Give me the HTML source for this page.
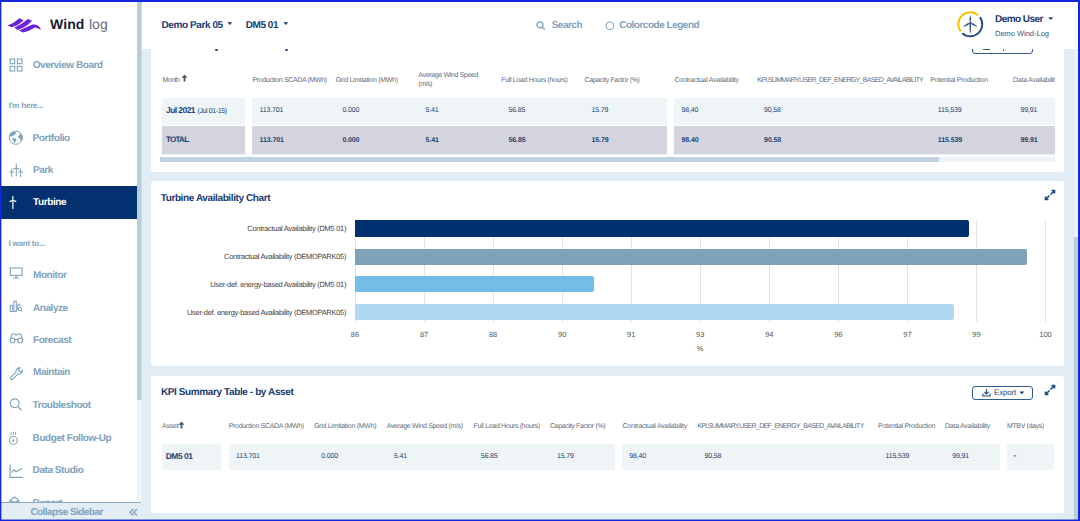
<!DOCTYPE html><html><head><meta charset="utf-8"><style>
html,body{margin:0;padding:0}
body{width:1080px;height:521px;overflow:hidden;position:relative;background:#fff;font-family:"Liberation Sans",sans-serif;text-rendering:geometricPrecision}
.t{position:absolute;white-space:nowrap;line-height:1}
.b{position:absolute}
</style></head><body>
<div class="b" style="left:141px;top:49px;width:933px;height:472px;background:#e1ecf5;"></div>
<div class="b" style="left:1074px;top:49px;width:4px;height:472px;background:#eef3f7;"></div>
<div class="b" style="left:1074px;top:237px;width:4px;height:284px;background:#bccfdc;"></div>
<div class="b" style="left:151px;top:20px;width:913px;height:152px;background:#fff;border-radius:3px"></div>
<div class="b" style="left:151px;top:181px;width:913px;height:185px;background:#fff;border-radius:3px"></div>
<div class="b" style="left:151px;top:375.8px;width:913px;height:137.2px;background:#fff;border-radius:3px"></div>
<div class="t" style="left:162.50px;top:77px;font-size:7px;font-weight:normal;color:#5f6b78;letter-spacing:-0.49px;">Month</div>
<svg class="b" style="left:181.3px;top:73.8px;" width="7" height="8" viewBox="0 0 7 8"><path d="M3.5 0.5 L6.5 3.8 L4.4 3.8 L4.4 7.5 L2.6 7.5 L2.6 3.8 L0.5 3.8 Z" fill="#4a5a6a"/></svg>
<div class="t" style="left:252.50px;top:77px;font-size:7px;font-weight:normal;color:#5f6b78;letter-spacing:-0.359px;">Production SCADA (MWh)</div>
<div class="t" style="left:335.70px;top:77px;font-size:7px;font-weight:normal;color:#5f6b78;letter-spacing:-0.285px;">Grid Limitation (MWh)</div>
<div class="t" style="left:501.20px;top:77px;font-size:7px;font-weight:normal;color:#5f6b78;letter-spacing:-0.314px;">Full Load Hours (hours)</div>
<div class="t" style="left:584.50px;top:77px;font-size:7px;font-weight:normal;color:#5f6b78;letter-spacing:-0.361px;">Capacity Factor (%)</div>
<div class="t" style="left:674.50px;top:77px;font-size:7px;font-weight:normal;color:#5f6b78;letter-spacing:-0.255px;">Contractual Availability</div>
<div class="t" style="left:757.30px;top:77px;font-size:7px;font-weight:normal;color:#5f6b78;letter-spacing:-0.683px;">KPI.SUMMARY.USER_DEF_ENERGY_BASED_AVAILABILITY</div>
<div class="t" style="left:930.20px;top:77px;font-size:7px;font-weight:normal;color:#5f6b78;letter-spacing:-0.253px;">Potential Production</div>
<div class="t" style="left:418.30px;top:72px;font-size:7px;font-weight:normal;color:#5f6b78;letter-spacing:-0.35px;">Average Wind Speed</div>
<div class="t" style="left:418.30px;top:81px;font-size:7px;font-weight:normal;color:#5f6b78;letter-spacing:-0.5px;">(m/s)</div>
<div class="b" style="left:1013px;top:70px;width:42px;height:16px;overflow:hidden">
<div class="t" style="left:0.00px;top:7px;font-size:7px;font-weight:normal;color:#5f6b78;letter-spacing:-0.25px;">Data Availability</div>
</div>
<div class="b" style="left:162px;top:98px;width:83px;height:25.5px;background:#eff4f7;box-shadow:0 1px 1px rgba(0,0,0,0.05)"></div>
<div class="b" style="left:251.8px;top:98px;width:415px;height:25.5px;background:#eff4f7;box-shadow:0 1px 1px rgba(0,0,0,0.05)"></div>
<div class="b" style="left:674px;top:98px;width:381px;height:25.5px;background:#eff4f7;box-shadow:0 1px 1px rgba(0,0,0,0.05)"></div>
<div class="b" style="left:162px;top:125.6px;width:83px;height:28.4px;background:#d4d4df;box-shadow:0 1px 1px rgba(0,0,0,0.05)"></div>
<div class="b" style="left:251.8px;top:125.6px;width:415px;height:28.4px;background:#d4d4df;box-shadow:0 1px 1px rgba(0,0,0,0.05)"></div>
<div class="b" style="left:674px;top:125.6px;width:381px;height:28.4px;background:#d4d4df;box-shadow:0 1px 1px rgba(0,0,0,0.05)"></div>
<div class="t" style="left:166.00px;top:106px;font-size:8.5px;font-weight:bold;color:#213f70;letter-spacing:-0.57px;">Jul 2021</div>
<div class="t" style="left:197.50px;top:108px;font-size:7px;font-weight:normal;color:#213f70;letter-spacing:-0.38px;">(Jul 01-15)</div>
<div class="t" style="left:166.00px;top:136px;font-size:8px;font-weight:bold;color:#213f70;letter-spacing:-0.72px;">TOTAL</div>
<div class="t" style="left:259.60px;top:107px;font-size:7px;font-weight:normal;color:#213f70;letter-spacing:-0.15px;">113.701</div>
<div class="t" style="left:259.60px;top:137px;font-size:7px;font-weight:bold;color:#213f70;letter-spacing:-0.1px;">113.701</div>
<div class="t" style="left:342.40px;top:107px;font-size:7px;font-weight:normal;color:#213f70;letter-spacing:-0.15px;">0.000</div>
<div class="t" style="left:342.40px;top:137px;font-size:7px;font-weight:bold;color:#213f70;letter-spacing:-0.1px;">0.000</div>
<div class="t" style="left:425.50px;top:107px;font-size:7px;font-weight:normal;color:#213f70;letter-spacing:-0.15px;">5.41</div>
<div class="t" style="left:425.50px;top:137px;font-size:7px;font-weight:bold;color:#213f70;letter-spacing:-0.1px;">5.41</div>
<div class="t" style="left:508.50px;top:107px;font-size:7px;font-weight:normal;color:#213f70;letter-spacing:-0.15px;">56.85</div>
<div class="t" style="left:508.50px;top:137px;font-size:7px;font-weight:bold;color:#213f70;letter-spacing:-0.1px;">56.85</div>
<div class="t" style="left:591.50px;top:107px;font-size:7px;font-weight:normal;color:#213f70;letter-spacing:-0.15px;">15.79</div>
<div class="t" style="left:591.50px;top:137px;font-size:7px;font-weight:bold;color:#213f70;letter-spacing:-0.1px;">15.79</div>
<div class="t" style="left:681.50px;top:107px;font-size:7px;font-weight:normal;color:#213f70;letter-spacing:-0.15px;">98,40</div>
<div class="t" style="left:681.50px;top:137px;font-size:7px;font-weight:bold;color:#213f70;letter-spacing:-0.1px;">98.40</div>
<div class="t" style="left:764.10px;top:107px;font-size:7px;font-weight:normal;color:#213f70;letter-spacing:-0.15px;">90,58</div>
<div class="t" style="left:764.10px;top:137px;font-size:7px;font-weight:bold;color:#213f70;letter-spacing:-0.1px;">90.58</div>
<div class="t" style="left:937.80px;top:107px;font-size:7px;font-weight:normal;color:#213f70;letter-spacing:-0.15px;">115,539</div>
<div class="t" style="left:937.80px;top:137px;font-size:7px;font-weight:bold;color:#213f70;letter-spacing:-0.1px;">115.539</div>
<div class="t" style="left:1020.50px;top:107px;font-size:7px;font-weight:normal;color:#213f70;letter-spacing:-0.15px;">99,91</div>
<div class="t" style="left:1020.50px;top:137px;font-size:7px;font-weight:bold;color:#213f70;letter-spacing:-0.1px;">99.91</div>
<div class="b" style="left:160px;top:157.2px;width:895px;height:5px;background:#eef3f6;"></div>
<div class="b" style="left:160px;top:157.2px;width:778.6px;height:5px;background:#bfd2de;"></div>
<div class="b" style="left:972.2px;top:31px;width:61.3px;height:23.1px;background:transparent;border:1px solid #2f5a94;border-radius:3px;box-sizing:border-box"></div>
<div class="t" style="left:160.70px;top:194px;font-size:10px;font-weight:bold;color:#193a70;letter-spacing:-0.39px;">Turbine Availability Chart</div>
<div class="b" style="left:354.5px;top:219.7px;width:1px;height:102px;background:#e3e3e3;"></div>
<div class="b" style="left:423.55px;top:219.7px;width:1px;height:102px;background:#e3e3e3;"></div>
<div class="b" style="left:492.6px;top:219.7px;width:1px;height:102px;background:#e3e3e3;"></div>
<div class="b" style="left:561.65px;top:219.7px;width:1px;height:102px;background:#e3e3e3;"></div>
<div class="b" style="left:630.7px;top:219.7px;width:1px;height:102px;background:#e3e3e3;"></div>
<div class="b" style="left:699.75px;top:219.7px;width:1px;height:102px;background:#e3e3e3;"></div>
<div class="b" style="left:768.8px;top:219.7px;width:1px;height:102px;background:#e3e3e3;"></div>
<div class="b" style="left:837.85px;top:219.7px;width:1px;height:102px;background:#e3e3e3;"></div>
<div class="b" style="left:906.9px;top:219.7px;width:1px;height:102px;background:#e3e3e3;"></div>
<div class="b" style="left:975.95px;top:219.7px;width:1px;height:102px;background:#e3e3e3;"></div>
<div class="b" style="left:1045.0px;top:219.7px;width:1px;height:102px;background:#e3e3e3;"></div>
<div class="b" style="left:355px;top:220.3px;width:614.3px;height:16.5px;background:#00306e;border-radius:0 2px 2px 0"></div>
<div class="b" style="left:355px;top:248.7px;width:671.9px;height:16px;background:#7fa3b9;border-radius:0 2px 2px 0"></div>
<div class="b" style="left:355px;top:276.4px;width:238.9px;height:15.8px;background:#74bde6;border-radius:0 2px 2px 0"></div>
<div class="b" style="left:355px;top:304.2px;width:598.8px;height:16px;background:#b0d8f0;border-radius:0 2px 2px 0"></div>
<div class="t" style="right:733.90px;top:225px;font-size:7.5px;font-weight:normal;color:#444;letter-spacing:-0.3px;text-align:right;">Contractual Availability (DM5 01)</div>
<div class="t" style="right:733.90px;top:253px;font-size:7.5px;font-weight:normal;color:#444;letter-spacing:-0.3px;text-align:right;">Contractual Availability (DEMOPARK05)</div>
<div class="t" style="right:733.90px;top:281px;font-size:7.5px;font-weight:normal;color:#444;letter-spacing:-0.3px;text-align:right;">User-def. energy-based Availability (DM5 01)</div>
<div class="t" style="right:733.90px;top:309px;font-size:7.5px;font-weight:normal;color:#444;letter-spacing:-0.3px;text-align:right;">User-def. energy-based Availability (DEMOPARK05)</div>
<div class="t" style="left:255.00px;width:200px;text-align:center;top:331px;font-size:7.5px;font-weight:normal;color:#555;letter-spacing:0px;">86</div>
<div class="t" style="left:324.05px;width:200px;text-align:center;top:331px;font-size:7.5px;font-weight:normal;color:#555;letter-spacing:0px;">87</div>
<div class="t" style="left:393.10px;width:200px;text-align:center;top:331px;font-size:7.5px;font-weight:normal;color:#555;letter-spacing:0px;">88</div>
<div class="t" style="left:462.15px;width:200px;text-align:center;top:331px;font-size:7.5px;font-weight:normal;color:#555;letter-spacing:0px;">90</div>
<div class="t" style="left:531.20px;width:200px;text-align:center;top:331px;font-size:7.5px;font-weight:normal;color:#555;letter-spacing:0px;">91</div>
<div class="t" style="left:600.25px;width:200px;text-align:center;top:331px;font-size:7.5px;font-weight:normal;color:#555;letter-spacing:0px;">93</div>
<div class="t" style="left:669.30px;width:200px;text-align:center;top:331px;font-size:7.5px;font-weight:normal;color:#555;letter-spacing:0px;">94</div>
<div class="t" style="left:738.35px;width:200px;text-align:center;top:331px;font-size:7.5px;font-weight:normal;color:#555;letter-spacing:0px;">96</div>
<div class="t" style="left:807.40px;width:200px;text-align:center;top:331px;font-size:7.5px;font-weight:normal;color:#555;letter-spacing:0px;">97</div>
<div class="t" style="left:876.45px;width:200px;text-align:center;top:331px;font-size:7.5px;font-weight:normal;color:#555;letter-spacing:0px;">99</div>
<div class="t" style="left:945.50px;width:200px;text-align:center;top:331px;font-size:7.5px;font-weight:normal;color:#555;letter-spacing:0px;">100</div>
<div class="t" style="left:600.20px;width:200px;text-align:center;top:345px;font-size:7.5px;font-weight:normal;color:#555;letter-spacing:0px;">%</div>
<svg class="b" style="left:1044px;top:189px;" width="12" height="12" viewBox="0 0 12 12"><path d="M6.5 5.5 L10.5 1.5 M7.5 1.5 H10.5 V4.5 M5.5 6.5 L1.5 10.5 M1.5 7.5 V10.5 H4.5" stroke="#1f4a8a" stroke-width="1.6" fill="none"/></svg>
<div class="t" style="left:160.90px;top:388px;font-size:10px;font-weight:bold;color:#193a70;letter-spacing:-0.39px;">KPI Summary Table - by Asset</div>
<div class="b" style="left:972.2px;top:386px;width:61.3px;height:13.8px;background:#fff;border:1px solid #2f5a94;border-radius:3px;box-sizing:border-box"></div>
<svg class="b" style="left:981.5px;top:388px;" width="9" height="9" viewBox="0 0 9 9"><path d="M4.5 0.8 V5.8 M2.3 3.8 L4.5 6 L6.7 3.8 M0.8 5.5 V8 H8.2 V5.5" stroke="#2a4a7a" stroke-width="1.1" fill="none"/></svg>
<div class="t" style="left:994.10px;top:389px;font-size:8px;font-weight:normal;color:#2a4570;letter-spacing:-0.2px;">Export</div>
<svg class="b" style="left:1018.5px;top:390.5px;" width="6" height="4" viewBox="0 0 6 4"><path d="M0.3 0.5 H5.3 L2.8 3.3 Z" fill="#1d3c6b"/></svg>
<svg class="b" style="left:1044.3px;top:384.4px;" width="12" height="12" viewBox="0 0 12 12"><path d="M6.5 5.5 L10.5 1.5 M7.5 1.5 H10.5 V4.5 M5.5 6.5 L1.5 10.5 M1.5 7.5 V10.5 H4.5" stroke="#1f4a8a" stroke-width="1.6" fill="none"/></svg>
<div class="t" style="left:162.00px;top:423px;font-size:7px;font-weight:normal;color:#5f6b78;letter-spacing:-0.2px;">Asset</div>
<svg class="b" style="left:177.5px;top:420.5px;" width="7" height="8" viewBox="0 0 7 8"><path d="M3.5 0.5 L6.5 3.8 L4.4 3.8 L4.4 7.5 L2.6 7.5 L2.6 3.8 L0.5 3.8 Z" fill="#4a5a6a"/></svg>
<div class="t" style="left:228.70px;top:423px;font-size:7px;font-weight:normal;color:#5f6b78;letter-spacing:-0.313px;">Production SCADA (MWh)</div>
<div class="t" style="left:313.90px;top:423px;font-size:7px;font-weight:normal;color:#5f6b78;letter-spacing:-0.266px;">Grid Limitation (MWh)</div>
<div class="t" style="left:386.70px;top:423px;font-size:7px;font-weight:normal;color:#5f6b78;letter-spacing:-0.33px;">Average Wind Speed (m/s)</div>
<div class="t" style="left:473.50px;top:423px;font-size:7px;font-weight:normal;color:#5f6b78;letter-spacing:-0.314px;">Full Load Hours (hours)</div>
<div class="t" style="left:549.90px;top:423px;font-size:7px;font-weight:normal;color:#5f6b78;letter-spacing:-0.34px;">Capacity Factor (%)</div>
<div class="t" style="left:622.50px;top:423px;font-size:7px;font-weight:normal;color:#5f6b78;letter-spacing:-0.238px;">Contractual Availability</div>
<div class="t" style="left:697.20px;top:423px;font-size:7px;font-weight:normal;color:#5f6b78;letter-spacing:-0.665px;">KPI.SUMMARY.USER_DEF_ENERGY_BASED_AVAILABILITY</div>
<div class="t" style="left:878.00px;top:423px;font-size:7px;font-weight:normal;color:#5f6b78;letter-spacing:-0.273px;">Potential Production</div>
<div class="t" style="left:945.00px;top:423px;font-size:7px;font-weight:normal;color:#5f6b78;letter-spacing:-0.253px;">Data Availability</div>
<div class="t" style="left:1007.00px;top:423px;font-size:7px;font-weight:normal;color:#5f6b78;letter-spacing:-0.377px;">MTBV (days)</div>
<div class="b" style="left:161.6px;top:443.8px;width:59.7px;height:25.2px;background:#eff4f7;box-shadow:0 1px 1px rgba(0,0,0,0.06);border-radius:2px"></div>
<div class="b" style="left:228.7px;top:443.8px;width:386.3px;height:25.2px;background:#eff4f7;box-shadow:0 1px 1px rgba(0,0,0,0.06);border-radius:2px"></div>
<div class="b" style="left:622.2px;top:443.8px;width:377.7px;height:25.2px;background:#eff4f7;box-shadow:0 1px 1px rgba(0,0,0,0.06);border-radius:2px"></div>
<div class="b" style="left:1006.5px;top:443.8px;width:47.3px;height:25.2px;background:#eff4f7;box-shadow:0 1px 1px rgba(0,0,0,0.06);border-radius:2px"></div>
<div class="t" style="left:165.70px;top:452px;font-size:8.5px;font-weight:bold;color:#213f70;letter-spacing:-0.51px;">DM5 01</div>
<div class="t" style="left:236.10px;top:453px;font-size:7px;font-weight:normal;color:#213f70;letter-spacing:-0.15px;">113.701</div>
<div class="t" style="left:321.30px;top:453px;font-size:7px;font-weight:normal;color:#213f70;letter-spacing:-0.15px;">0.000</div>
<div class="t" style="left:394.00px;top:453px;font-size:7px;font-weight:normal;color:#213f70;letter-spacing:-0.15px;">5.41</div>
<div class="t" style="left:480.70px;top:453px;font-size:7px;font-weight:normal;color:#213f70;letter-spacing:-0.15px;">56.85</div>
<div class="t" style="left:557.10px;top:453px;font-size:7px;font-weight:normal;color:#213f70;letter-spacing:-0.15px;">15.79</div>
<div class="t" style="left:629.30px;top:453px;font-size:7px;font-weight:normal;color:#213f70;letter-spacing:-0.15px;">98,40</div>
<div class="t" style="left:704.50px;top:453px;font-size:7px;font-weight:normal;color:#213f70;letter-spacing:-0.15px;">90,58</div>
<div class="t" style="left:885.50px;top:453px;font-size:7px;font-weight:normal;color:#213f70;letter-spacing:-0.15px;">115,539</div>
<div class="t" style="left:952.20px;top:453px;font-size:7px;font-weight:normal;color:#213f70;letter-spacing:-0.15px;">99,91</div>
<div class="t" style="left:1013.50px;top:452px;font-size:8px;font-weight:bold;color:#213f70;letter-spacing:0px;">-</div>
<div class="b" style="left:142px;top:0px;width:936px;height:49px;background:#fff;"></div>
<div class="t" style="left:161.50px;top:21px;font-size:10px;font-weight:bold;color:#193a70;letter-spacing:-0.41px;">Demo Park 05</div>
<svg class="b" style="left:227px;top:22px;" width="6" height="4" viewBox="0 0 6 4"><path d="M0.3 0.3 H5.3 L2.8 3.1 Z" fill="#1d3c6b"/></svg>
<div class="t" style="left:245.80px;top:21px;font-size:10px;font-weight:bold;color:#193a70;letter-spacing:-0.47px;">DM5 01</div>
<svg class="b" style="left:282.6px;top:22px;" width="6" height="4" viewBox="0 0 6 4"><path d="M0.3 0.3 H5.3 L2.8 3.1 Z" fill="#1d3c6b"/></svg>
<svg class="b" style="left:536px;top:20.5px;" width="10" height="10" viewBox="0 0 10 10"><circle cx="3.9" cy="3.9" r="3" stroke="#7fa2bc" stroke-width="1.3" fill="none"/><path d="M6.1 6.1 L8.8 8.6" stroke="#7fa2bc" stroke-width="1.4"/></svg>
<div class="t" style="left:551.70px;top:21px;font-size:10px;font-weight:bold;color:#7fa2bc;letter-spacing:-0.51px;">Search</div>
<svg class="b" style="left:604.5px;top:20.7px;" width="10" height="10" viewBox="0 0 10 10"><circle cx="4.85" cy="4.75" r="3.95" stroke="#7fa2bc" stroke-width="1" fill="none"/></svg>
<div class="t" style="left:619.20px;top:21px;font-size:10px;font-weight:bold;color:#7fa2bc;letter-spacing:-0.49px;">Colorcode Legend</div>
<svg class="b" style="left:954px;top:8px;" width="32" height="32" viewBox="0 0 32 32"><path d="M6.72 23.52 A12 12 0 0 1 24.17 7.24" stroke="#f5c400" stroke-width="1.9" fill="none"/><path d="M25.88 9.08 A12 12 0 0 1 8.27 25.22" stroke="#2c4f8c" stroke-width="1.9" fill="none"/><path d="M15.5 15 L17.1 15 L16.8 24.8 L15.8 24.8 Z" fill="#2c4f8c"/><path d="M16.3 6.9 Q18.1 11 16.3 14.9 Q14.5 11 16.3 6.9 Z" fill="#2c4f8c"/><path d="M9.6 18.5 Q12.4 15.4 16.3 14.7 Q13.8 17.8 9.6 18.5 Z" fill="#2c4f8c" stroke="#2c4f8c" stroke-width="0.5"/><path d="M23 18.5 Q20.2 15.4 16.3 14.7 Q18.8 17.8 23 18.5 Z" fill="#2c4f8c" stroke="#2c4f8c" stroke-width="0.5"/><circle cx="16.3" cy="14.8" r="1" fill="#2c4f8c"/></svg>
<div class="t" style="left:995.00px;top:15px;font-size:10px;font-weight:bold;color:#193a70;letter-spacing:-0.56px;">Demo User</div>
<svg class="b" style="left:1047.5px;top:17px;" width="6" height="4" viewBox="0 0 6 4"><path d="M0.3 0.3 H5.3 L2.8 3.1 Z" fill="#1d3c6b"/></svg>
<div class="t" style="left:995.00px;top:30px;font-size:7.5px;font-weight:normal;color:#3a5580;letter-spacing:-0.02px;">Demo Wind-Log</div>
<div class="b" style="left:214.8px;top:48.9px;width:3.2px;height:1.8px;background:#2a4a8a;border-radius:1px"></div>
<div class="b" style="left:284.5px;top:48.9px;width:3.2px;height:1.8px;background:#2a4a8a;border-radius:1px"></div>
<div class="b" style="left:982.5px;top:49px;width:7px;height:1.3px;background:#2f5a94;"></div>
<div class="b" style="left:1002.6px;top:49px;width:1.6px;height:1.5px;background:#6a6aa0;"></div>
<div class="b" style="left:0px;top:0px;width:137px;height:521px;background:#fff;"></div>
<div class="b" style="left:137px;top:0px;width:4px;height:400px;background:#b9cedc;"></div>
<div class="b" style="left:141px;top:0px;width:1px;height:400px;background:#cddbe5;"></div>
<div class="b" style="left:137px;top:400px;width:4px;height:103px;background:#eef3f6;"></div>
<div class="b" style="left:141px;top:400px;width:1px;height:103px;background:#e8f0f6;"></div>
<div class="b" style="left:0px;top:186px;width:137px;height:33px;background:#03306f;"></div>
<div class="t" style="left:32.70px;top:61px;font-size:10px;font-weight:bold;color:#7fa2bc;letter-spacing:-0.44px;">Overview Board</div>
<div class="t" style="left:32.60px;top:134px;font-size:10px;font-weight:bold;color:#7fa2bc;letter-spacing:-0.44px;">Portfolio</div>
<div class="t" style="left:33.00px;top:166px;font-size:10px;font-weight:bold;color:#7fa2bc;letter-spacing:-0.44px;">Park</div>
<div class="t" style="left:33.00px;top:271px;font-size:10px;font-weight:bold;color:#7fa2bc;letter-spacing:-0.44px;">Monitor</div>
<div class="t" style="left:33.00px;top:304px;font-size:10px;font-weight:bold;color:#7fa2bc;letter-spacing:-0.44px;">Analyze</div>
<div class="t" style="left:33.00px;top:336px;font-size:10px;font-weight:bold;color:#7fa2bc;letter-spacing:-0.44px;">Forecast</div>
<div class="t" style="left:33.00px;top:368px;font-size:10px;font-weight:bold;color:#7fa2bc;letter-spacing:-0.44px;">Maintain</div>
<div class="t" style="left:32.60px;top:401px;font-size:10px;font-weight:bold;color:#7fa2bc;letter-spacing:-0.44px;">Troubleshoot</div>
<div class="t" style="left:32.60px;top:434px;font-size:10px;font-weight:bold;color:#7fa2bc;letter-spacing:-0.44px;">Budget Follow-Up</div>
<div class="t" style="left:32.60px;top:466px;font-size:10px;font-weight:bold;color:#7fa2bc;letter-spacing:-0.44px;">Data Studio</div>
<div class="t" style="left:32.60px;top:499px;font-size:10px;font-weight:bold;color:#7fa2bc;letter-spacing:-0.44px;">Report</div>
<div class="t" style="left:33.00px;top:198px;font-size:10px;font-weight:bold;color:#fff;letter-spacing:-0.39px;">Turbine</div>
<div class="t" style="left:8.70px;top:102px;font-size:8px;font-weight:bold;color:#7fa2bc;letter-spacing:-0.22px;">I'm here...</div>
<div class="t" style="left:8.60px;top:240px;font-size:8px;font-weight:bold;color:#7fa2bc;letter-spacing:-0.23px;">I want to...</div>
<svg class="b" style="left:5px;top:14px;" width="40" height="22" viewBox="0 0 40 22"><path d="M2.5 11.4 Q9 9.2 14.4 4.2 L18.6 6.3 Q13.5 11.8 6.3 13.3 Z" fill="#6a22d6"/><path d="M9.3 13.6 Q16.5 10.8 22.8 5.1 L27 6.8 Q21 13.6 12.7 16 Z" fill="#6a22d6"/><path d="M13.9 16.5 Q21 13.5 27.4 10.6 Q31 9.8 33.5 12 Q35.5 13.5 35.9 15.6 Q33.5 14.8 32.1 13.9 Q31 13.1 30 13.6 Q24 17.2 18.2 18.6 Z" fill="#6a22d6"/></svg>
<div class="t" style="left:50.00px;top:17px;font-size:14px;font-weight:bold;color:#1a1a3a;letter-spacing:0.08px;">Wind</div>
<div class="t" style="left:88.90px;top:17px;font-size:14px;font-weight:normal;color:#6b6b80;letter-spacing:0.07px;">log</div>
<svg class="b" style="left:8.5px;top:57.5px;" width="15" height="15" viewBox="0 0 15 15"><rect x="1.1" y="1.1" width="4.6" height="4.6" fill="none" stroke="#7fa2bc" stroke-width="1.1"/><rect x="1.1" y="8.4" width="4.6" height="4.6" fill="none" stroke="#7fa2bc" stroke-width="1.1"/><rect x="8.4" y="1.1" width="4.6" height="4.6" fill="none" stroke="#7fa2bc" stroke-width="1.1"/><rect x="8.4" y="8.4" width="4.6" height="4.6" fill="none" stroke="#7fa2bc" stroke-width="1.1"/></svg>
<svg class="b" style="left:8px;top:129.5px;" width="16" height="16" viewBox="0 0 16 16"><circle cx="7.8" cy="7.7" r="6.6" fill="none" stroke="#7fa2bc" stroke-width="1"/><path d="M1.3 5.6 Q1.8 3 2.8 2.7 Q5.5 1.5 8 2.2 Q8.3 3.4 7.5 3.9 Q5.5 5 4.2 6.5 Q2.5 6.8 1.3 5.6 Z" fill="#7fa2bc"/><path d="M9.5 7 Q11 5 12.8 3.7 Q14.6 5.5 14.75 8 Q14.2 10.2 12.8 11.3 Q12.5 9 11.4 7.9 Q10.3 7.6 9.5 7 Z" fill="#7fa2bc"/><path d="M4.2 8.3 Q6.5 7.8 8.5 8.9 Q8 11.5 6.6 13.3 Q5.8 11.5 5 10.3 Q4.2 9.5 4.2 8.3 Z" fill="#7fa2bc"/></svg>
<svg class="b" style="left:8.5px;top:162.7px;" width="15" height="15" viewBox="0 0 15 15"><path d="M7.3 0.5 V13.2" stroke="#7fa2bc" stroke-width="1.1"/><path d="M4.3 6.2 Q7.3 4.4 10.3 6.2" stroke="#7fa2bc" stroke-width="1.1" fill="none"/><path d="M2.7 5.5 V14" stroke="#7fa2bc" stroke-width="1"/><path d="M0.40000000000000036 9.4 Q2.7 7.6 5.0 9.4" stroke="#7fa2bc" stroke-width="1" fill="none"/><path d="M11.6 5.5 V14" stroke="#7fa2bc" stroke-width="1"/><path d="M9.399999999999999 9.4 Q11.6 7.6 13.8 9.4" stroke="#7fa2bc" stroke-width="1" fill="none"/></svg>
<svg class="b" style="left:8.5px;top:195px;" width="9" height="15" viewBox="0 0 9 15"><path d="M3.9 1 V14" stroke="#fff" stroke-width="1.2"/><path d="M0.5 6.6 Q3.9 4.8 7.3 6.6" stroke="#fff" stroke-width="1.2" fill="none"/></svg>
<svg class="b" style="left:8.5px;top:267px;" width="14" height="12" viewBox="0 0 14 12"><rect x="1.3" y="1.0" width="11.7" height="7.4" fill="none" stroke="#7fa2bc" stroke-width="1.1"/><path d="M7.1 8.5 V10.5 M4.3 11 H9.8" stroke="#7fa2bc" stroke-width="1.1"/></svg>
<svg class="b" style="left:8.5px;top:300px;" width="14" height="13" viewBox="0 0 14 13"><rect x="1.3" y="5.3" width="2.5" height="6.2" fill="none" stroke="#7fa2bc" stroke-width="1"/><rect x="4.9" y="1.3" width="2.4" height="10.2" fill="none" stroke="#7fa2bc" stroke-width="1"/><path d="M8.8 10.5 V4.2 H10.8 V6" stroke="#7fa2bc" stroke-width="1" fill="none"/><circle cx="10.8" cy="9" r="1.7" fill="none" stroke="#7fa2bc" stroke-width="1"/><path d="M12 10.3 L13.3 11.7" stroke="#7fa2bc" stroke-width="1"/></svg>
<svg class="b" style="left:8.5px;top:333px;" width="15" height="11" viewBox="0 0 15 11"><circle cx="3.6" cy="7.4" r="2.4" fill="none" stroke="#7fa2bc" stroke-width="1.1"/><circle cx="11.1" cy="7.4" r="2.4" fill="none" stroke="#7fa2bc" stroke-width="1.1"/><path d="M1.3 7 L2.6 1.6 Q3.2 0.6 4.5 0.8 L6 1.5 Q7.3 2.5 8.7 1.5 L10.2 0.8 Q11.5 0.6 12.1 1.6 L13.4 7 M5.9 6.5 H8.8" stroke="#7fa2bc" stroke-width="1.1" fill="none"/></svg>
<svg class="b" style="left:8.5px;top:366.5px;" width="15" height="14" viewBox="0 0 15 14"><path d="M1.8 12.2 Q0.9 11.3 1.7 10.4 L7 5.4 Q6.5 3 8.1 1.6 Q9.5 0.6 11 0.9 L9.4 2.6 L10.1 4.2 L11.8 4.8 L13.4 3.3 Q13.7 5.2 12.4 6.4 Q11 7.6 8.9 7.2 L3.6 12.3 Q2.7 13.1 1.8 12.2 Z" fill="none" stroke="#7fa2bc" stroke-width="1.1"/></svg>
<svg class="b" style="left:8.5px;top:398px;" width="14" height="14" viewBox="0 0 14 14"><circle cx="5.6" cy="5.3" r="4.4" fill="none" stroke="#7fa2bc" stroke-width="1.2"/><path d="M8.8 8.6 L12.4 12.3" stroke="#7fa2bc" stroke-width="1.3"/></svg>
<svg class="b" style="left:9px;top:430.5px;" width="9" height="14" viewBox="0 0 9 14"><circle cx="4.4" cy="9.4" r="3.9" fill="none" stroke="#7fa2bc" stroke-width="1.1"/><ellipse cx="4.4" cy="9.4" rx="0.9" ry="1.5" fill="#7fa2bc"/><path d="M2.2 1 V4 M4.4 0.5 V4 M6.6 1 V4" stroke="#7fa2bc" stroke-width="0.9"/></svg>
<svg class="b" style="left:8.5px;top:463.5px;" width="15" height="15" viewBox="0 0 15 15"><path d="M1.1 0.5 V13.4 H14" stroke="#7fa2bc" stroke-width="1.2" fill="none"/><path d="M2.8 8.5 L4.6 5.8 L7.1 7.8 L13.3 4.6" stroke="#7fa2bc" stroke-width="1.1" fill="none"/></svg>
<svg class="b" style="left:8.5px;top:495.5px;" width="12" height="7" viewBox="0 0 12 7"><path d="M1 7 V4.5 L5.5 1 L10 4.5 V7 M1.5 4.5 Q5.5 7.5 9.5 4.5" stroke="#7fa2bc" stroke-width="1.1" fill="none"/></svg>
<div class="b" style="left:0px;top:502px;width:141px;height:18px;background:#e3edf5;border-top:1px solid #8aabc2;box-sizing:border-box"></div>
<div class="t" style="left:30.40px;top:508px;font-size:10px;font-weight:bold;color:#7fa2bc;letter-spacing:-0.55px;">Collapse Sidebar</div>
<svg class="b" style="left:128.5px;top:507.5px;" width="9" height="9" viewBox="0 0 9 9"><path d="M4.3 1 L1 4.3 L4.3 7.6 M8 1 L4.7 4.3 L8 7.6" stroke="#7fa2bc" stroke-width="1.4" fill="none"/></svg>
<div class="b" style="left:0px;top:0px;width:1080px;height:2px;background:#1526e0;"></div>
<div class="b" style="left:0px;top:520px;width:1080px;height:1px;background:#1526e0;"></div>
<div class="b" style="left:0px;top:519px;width:1080px;height:1px;background:rgba(21,38,224,0.45);"></div>
<div class="b" style="left:0px;top:0px;width:1px;height:521px;background:#1526e0;"></div>
<div class="b" style="left:1px;top:0px;width:1px;height:521px;background:rgba(21,38,224,0.35);"></div>
<div class="b" style="left:1078px;top:0px;width:2px;height:521px;background:#1526e0;"></div>
</body></html>
